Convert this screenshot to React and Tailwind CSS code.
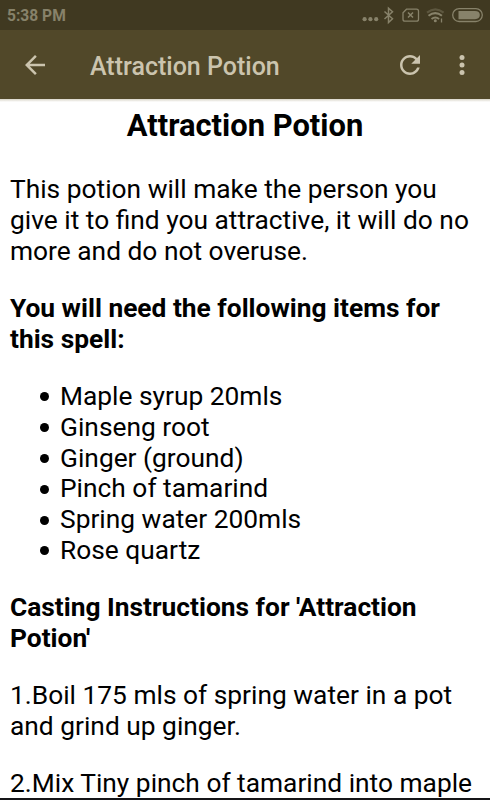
const ingredients = [
  'Maple syrup 20mls',
  'Ginseng root',
  'Ginger (ground)',
  'Pinch of tamarind',
  'Spring water 200mls',
  'Rose quartz',
];

function StatusIcons() {
  return (
    <svg className="h-[30px] w-[130px]" viewBox="360 0 130 30" fill="none" stroke="#87826a" strokeWidth="1.3">
      <g fill="#87826a" stroke="none">
        <circle cx="364.6" cy="19.2" r="2.1" />
        <circle cx="370.4" cy="19.2" r="2.1" />
        <circle cx="376.2" cy="19.2" r="2.1" />
      </g>
      <path d="M384.5 11.5l8 7.2-4 3.8V8.2l4 3.6-8 7.2" strokeWidth="1.5" />
      <path d="M406.5 9.2H416.5q2 0 2 2v8q0 2-2 2H405q-2 0-2-2v-6.5z" />
      <path d="M408 12.5l5 5M413 12.5l-5 5" strokeWidth="1.5" />
      <path d="M427 12.6q8.300-6.600 16.600 0" stroke="#5d573f" strokeWidth="2.2" />
      <path d="M428.500 15.800q6.800-5.400 13.400 0M431.500 19q3.800-3 7.600 0" strokeWidth="2" />
      <circle cx="435.300" cy="20.800" r="1.500" fill="#87826a" stroke="none" />
      <path d="M441.500 18.500v4" />
      <rect x="452.700" y="8.700" width="29.600" height="12.800" rx="6.400" />
      <path d="M458.500 11H475q4.800 0 4.800 4.100t-4.800 4.100H458.500z" fill="#87826a" stroke="none" />
    </svg>
  );
}

export default function App() {
  return (
    <div className="flex h-[800px] w-[490px] flex-col overflow-hidden bg-white font-['Roboto',sans-serif] text-black">
      <div className="flex h-[30px] shrink-0 items-center justify-between bg-[#403921] pl-[7px]">
        <span className="pt-[3px] text-[15.6px] font-bold leading-none text-[#87826a]">5:38 PM</span>
        <StatusIcons />
      </div>
      <header className="flex h-[69px] shrink-0 items-center bg-[#514829] text-[#cbc4ae]">
        <svg className="ml-[20px] h-[30px] w-[30px]" viewBox="0 0 24 24" fill="currentColor">
          <path d="M20 11H7.830l5.590-5.590L12 4l-8 8 8 8 1.410-1.410L7.830 13H20v-2z" />
        </svg>
        <h1 className="ml-[40px] flex-1 pt-[3px] text-[25px] font-medium leading-none">Attraction Potion</h1>
        <svg className="h-[30px] w-[30px]" viewBox="0 0 24 24" fill="currentColor">
          <path d="M17.650 6.350C16.200 4.900 14.210 4 12 4c-4.420 0-7.990 3.580-7.990 8s3.570 8 7.990 8c3.730 0 6.840-2.550 7.730-6h-2.080c-.82 2.330-3.040 4-5.650 4-3.310 0-6-2.690-6-6s2.690-6 6-6c1.660 0 3.140.69 4.220 1.780L13 11h7V4l-2.350 2.350z" />
        </svg>
        <svg className="ml-[22px] mr-[13px] h-[30px] w-[30px]" viewBox="0 0 24 24" fill="currentColor">
          <circle cx="12" cy="6" r="2" />
          <circle cx="12" cy="12" r="2" />
          <circle cx="12" cy="18" r="2" />
        </svg>
      </header>
      <div className="h-[3px] shrink-0 bg-linear-to-b from-[#d9d5c8] to-white" />
      <main className="min-h-0 flex-1 overflow-hidden pl-[10px] text-[26.33px] leading-[30.85px]">
        <h2 className="mr-[10px] pt-[6px] text-center text-[30.9px] font-bold leading-[36px]">Attraction Potion</h2>
        <p className="mt-[30px]">
          This potion will make the person you<br />give it to find you attractive, it will do no<br />more and do not overuse.
        </p>
        <p className="mt-[26.3px] font-bold">
          You will need the following items for<br />this spell:
        </p>
        <ul className="mt-[26.3px]">
          {ingredients.map((item) => (
            <li key={item} className="flex items-center pl-[30px]">
              <span className="mr-[11px] mt-px h-[9px] w-[9px] rounded-full bg-black" />
              {item}
            </li>
          ))}
        </ul>
        <p className="mt-[26.3px] font-bold">
          Casting Instructions for 'Attraction<br />Potion'
        </p>
        <p className="mt-[26.3px]">
          1.Boil 175 mls of spring water in a pot<br />and grind up ginger.
        </p>
        <p className="mt-[26.3px] whitespace-nowrap">2.Mix Tiny pinch of tamarind into maple</p>
      </main>
      <div className="h-[2px] shrink-0 bg-[#151518]" />
    </div>
  );
}
